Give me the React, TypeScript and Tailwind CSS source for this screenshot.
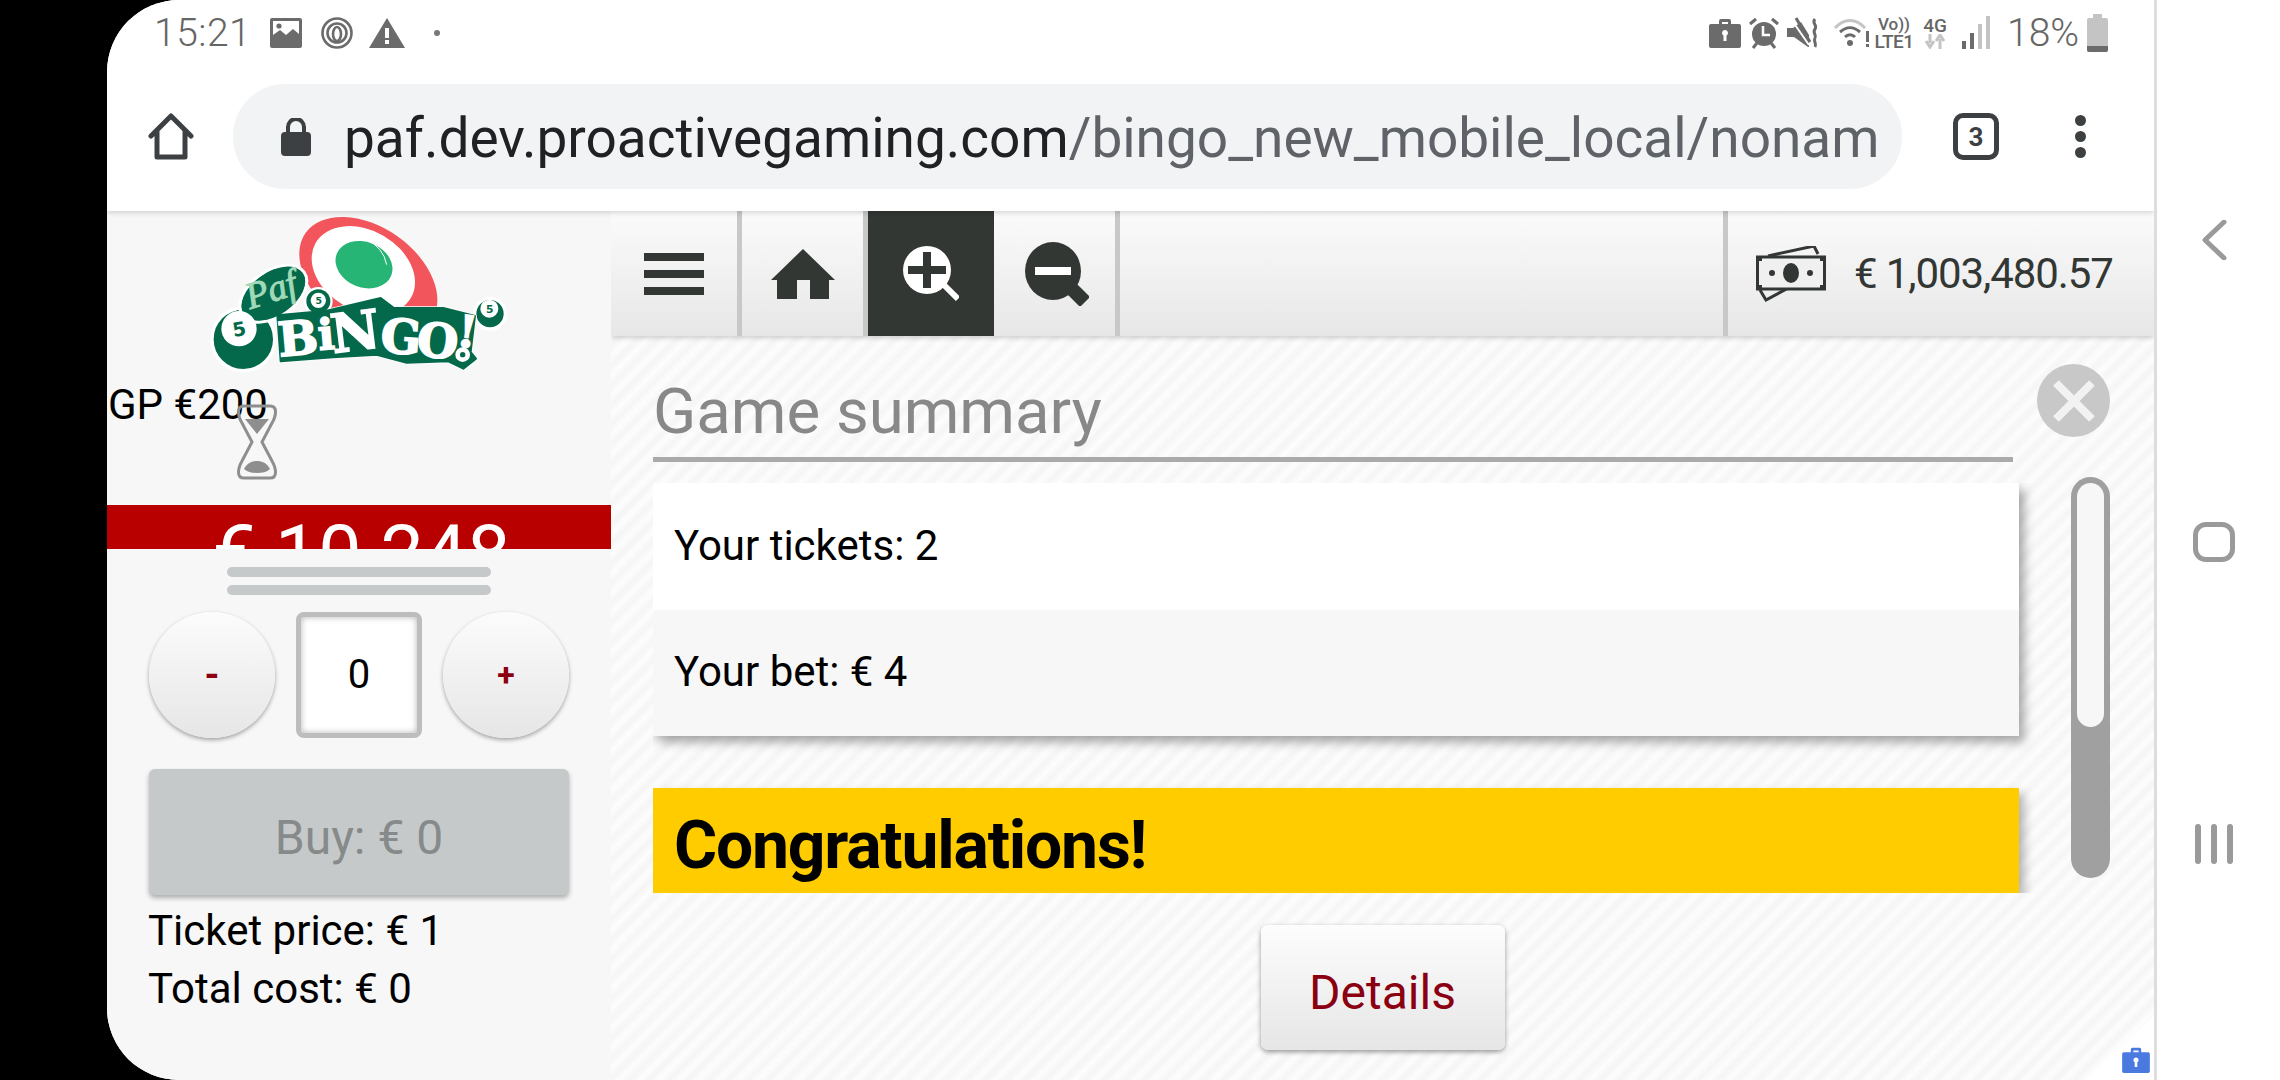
import React from "react";

const sans = "font-['Roboto','Liberation_Sans',sans-serif]";

function Logo() {
  const dark = "#04694a";
  const band = "M262 310 L410 296 L572 258 L612 288 L760 288 L855 312 L842 420 L858 440 L820 470 L775 448 L650 452 L560 428 L430 436 L272 448 Z";
  return (
    <svg width="340" height="180" viewBox="0 0 1020 540" className="block">
      <ellipse cx="535" cy="195" rx="230" ry="150" transform="rotate(35 535 195)" fill="#f2555c" />
      <ellipse cx="520" cy="175" rx="165" ry="120" transform="rotate(30 520 175)" fill="#ffffff" />
      <ellipse cx="522" cy="158" rx="88" ry="68" transform="rotate(22 522 158)" fill="#26b574" />
      <path d="M525 80 Q580 105 590 158" fill="none" stroke="#ffffff" strokeWidth="3" />
      <g stroke="#ffffff" strokeWidth="10">
        <circle cx="160" cy="382" r="94" fill={dark} />
        <ellipse cx="250" cy="245" rx="112" ry="68" transform="rotate(-35 250 245)" fill={dark} />
        <circle cx="385" cy="268" r="38" fill={dark} />
        <circle cx="900" cy="305" r="46" fill={dark} />
        <path d={band} fill={dark} strokeLinejoin="round" />
      </g>
      <ellipse cx="250" cy="245" rx="108" ry="64" transform="rotate(-35 250 245)" fill={dark} />
      <path d={band} fill={dark} stroke={dark} strokeWidth="6" strokeLinejoin="round" />
      <circle cx="147" cy="350" r="53" fill="#ffffff" />
      <circle cx="385" cy="268" r="36" fill={dark} />
      <circle cx="385" cy="265" r="23" fill="#ffffff" />
      <circle cx="898" cy="290" r="27" fill="#ffffff" />
      <circle cx="818" cy="428" r="22" fill="#ffffff" />
      <circle cx="818" cy="428" r="8" fill={dark} />
      <g fontFamily="'DejaVu Sans', sans-serif" fontWeight="700" fill={dark} textAnchor="middle">
        <text x="147" y="372" fontSize="58" transform="rotate(-10 147 350)">5</text>
        <text x="386" y="276" fontSize="28">5</text>
        <text x="899" y="302" fontSize="32">5</text>
      </g>
      <text x="180" y="292" fontSize="112" fontStyle="italic" fontFamily="'Liberation Serif', serif" fill="#9fd9b8" stroke="#9fd9b8" strokeWidth="3" transform="rotate(-18 180 292)">Paf</text>
      <g fontFamily="'DejaVu Serif', serif" fontWeight="700" fill="#ffffff" stroke="#ffffff" strokeWidth="5" textAnchor="middle">
        <text x="328" y="428" fontSize="142" transform="rotate(-5 328 428)">B</text>
        <text x="412" y="412" fontSize="128" transform="rotate(-5 412 412)">i</text>
        <text x="502" y="414" fontSize="160" transform="rotate(-7 502 414)">N</text>
        <text x="630" y="424" fontSize="142" transform="rotate(4 630 424)">G</text>
        <text x="738" y="436" fontSize="142" transform="rotate(6 738 436)">O</text>
        <text x="825" y="405" fontSize="132" transform="rotate(8 825 405)">!</text>
      </g>
    </svg>
  );
}

function StatusLeft() {
  const c = "#6b6b6b";
  return (
    <div className="flex items-center">
      <span className={`${sans} text-[39px] leading-none font-light text-[#666] tracking-[0.5px] w-[116px]`}>15:21</span>
      <svg width="32" height="30" viewBox="0 0 32 30" className="mr-[18px]">
        <path fillRule="evenodd" d="M2 0h28a2 2 0 0 1 2 2v26a2 2 0 0 1-2 2H2a2 2 0 0 1-2-2V2a2 2 0 0 1 2-2zM3 3v14l7 -5 6 5 7-6 6 5V3z" fill={c} />
        <circle cx="9" cy="8" r="2.6" fill={c} />
      </svg>
      <svg width="34" height="32" viewBox="0 0 34 32" className="mr-[15px]">
        <g fill="none" stroke={c} strokeWidth="2.6">
          <circle cx="17" cy="16" r="14.5" />
          <circle cx="17" cy="16" r="9.5" />
          <ellipse cx="17" cy="17" rx="4" ry="7" />
        </g>
      </svg>
      <svg width="36" height="30" viewBox="0 0 36 30" className="mr-[29px]">
        <path fillRule="evenodd" d="M18 0L36 30H0zM16 10v10h4V10zM16 22v4h4v-4z" fill={c} />
      </svg>
      <div className="w-[6px] h-[6px] rounded-full bg-[#777]" />
    </div>
  );
}

function StatusRight() {
  const c = "#6b6b6b";
  const l = "#c4c4c4";
  return (
    <div className="flex items-center">
      <svg width="32" height="30" viewBox="0 0 32 30" className="mr-[7px]">
        <path fillRule="evenodd" d="M10 6V3a2 2 0 0 1 2-2h8a2 2 0 0 1 2 2v3h8a2 2 0 0 1 2 2v20a2 2 0 0 1-2 2H2a2 2 0 0 1-2-2V8a2 2 0 0 1 2-2zM13 4v2h6V4zM16 12a3 3 0 0 0-1.500 5.600V23h3v-5.400A3 3 0 0 0 16 12z" fill={c} />
      </svg>
      <svg width="32" height="32" viewBox="0 0 32 32" className="mr-[7px]">
        <circle cx="16" cy="17" r="12" fill={c} />
        <path d="M15 9v9h7" fill="none" stroke="#fff" strokeWidth="2.500" />
        <path d="M2 7l6-5M30 7l-6-5M5 31l4-5M27 31l-4-5" stroke={c} strokeWidth="3" />
      </svg>
      <svg width="32" height="32" viewBox="0 0 32 32" className="mr-[15px]">
        <path d="M0 11h6L14 5l8 13v12h-1L7 20H0z" fill={c} />
        <path d="M4 2l18 26" stroke="#fff" strokeWidth="2" />
        <path d="M9 1l14 24" stroke={c} strokeWidth="3" />
        <path d="M28 2c-4 4 3 6 0 10s2 6 0 9 2 6 0 9" fill="none" stroke={c} strokeWidth="3" />
      </svg>
      <svg width="36" height="32" viewBox="0 0 36 32" className="mr-[5px]">
        <path d="M1 11C10 1 22 1 31 11" fill="none" stroke={l} strokeWidth="3" />
        <path d="M6 15C13 9 19 9 26 15M11 20C14 17 18 17 21 20" fill="none" stroke={c} strokeWidth="3" />
        <circle cx="16" cy="26" r="3" fill={c} />
        <rect x="32" y="14" width="3" height="11" fill={c} />
        <rect x="32" y="27" width="3" height="3" fill={c} />
      </svg>
      <div className={`${sans} flex flex-col items-center w-[38px] mr-[10px] text-[#666] font-medium leading-[17px]`}>
        <span className="text-[17px]">Vo))</span>
        <span className="text-[19px] tracking-[-0.5px]">LTE1</span>
      </div>
      <div className={`${sans} flex flex-col items-center w-[24px] mr-[15px] text-[#666] font-medium leading-[17px]`}>
        <span className="text-[19px]">4G</span>
        <svg width="24" height="15" viewBox="0 0 24 15">
          <path d="M7 0v9M3 7l4 6 4-6M17 15V5M13 7l4-6 4 6" fill="none" stroke={l} strokeWidth="3" />
        </svg>
      </div>
      <svg width="28" height="36" viewBox="0 0 28 36" className="mr-[17px]">
        <rect x="0" y="26" width="4" height="8" fill={c} />
        <rect x="8" y="18" width="4" height="16" fill={c} />
        <rect x="16" y="9" width="4" height="25" fill={l} />
        <rect x="24" y="1" width="4" height="33" fill={l} />
      </svg>
      <span className={`${sans} text-[39px] leading-none font-light text-[#666] w-[80px]`}>18%</span>
      <svg width="21" height="38" viewBox="0 0 21 38">
        <path d="M6 0h9v4h4a2 2 0 0 1 2 2v30a2 2 0 0 1-2 2H2a2 2 0 0 1-2-2V6a2 2 0 0 1 2-2h4z" fill={l} />
        <path d="M0 32h21v4a2 2 0 0 1-2 2H2a2 2 0 0 1-2-2z" fill={c} />
      </svg>
    </div>
  );
}

function AddressBar() {
  return (
    <div className="flex items-center h-[105px] mt-[22px]">
      <div className="w-[126px] flex justify-start pl-[41px]">
        <svg width="46" height="47" viewBox="0 0 46 47">
          <path d="M3 23L23 3l20 20M9 18v26h28V18" fill="none" stroke="#3c4043" strokeWidth="5" strokeLinejoin="round" strokeLinecap="round" />
        </svg>
      </div>
      <div className="w-[1669px] h-[105px] rounded-[52px] bg-[#f1f3f4] flex items-center pl-[48px] overflow-hidden">
        <svg width="30" height="38" viewBox="0 0 30 38" className="shrink-0 mr-[33px]">
          <path d="M7 15V9a8 8 0 0 1 16 0v6" fill="none" stroke="#3c4043" strokeWidth="4" />
          <rect x="0" y="14" width="30" height="24" rx="4" fill="#3c4043" />
        </svg>
        <span className={`${sans} text-[55px] leading-none pt-[3px] whitespace-nowrap text-[#5f6368] tracking-[-0.01px]`}>
          <span className="text-[#202124]">paf.dev.proactivegaming.com</span>/bingo_new_mobile_local/nonam
        </span>
      </div>
      <div className="w-[51px]" />
      <div className={`${sans} w-[46px] h-[47px] rounded-[10px] border-[5px] border-[#3c4043] flex items-center justify-center text-[26px] font-bold text-[#3c4043] leading-none`}>3</div>
      <div className="ml-[76px] flex flex-col gap-[5px]">
        <div className="w-[11px] h-[11px] rounded-full bg-[#3c4043]" />
        <div className="w-[11px] h-[11px] rounded-full bg-[#3c4043]" />
        <div className="w-[11px] h-[11px] rounded-full bg-[#3c4043]" />
      </div>
    </div>
  );
}

function Hourglass() {
  return (
    <svg width="40" height="76" viewBox="0 0 40 76" className="absolute left-[130px] top-[193px]">
      <path d="M7 2h26c8 0 6 10 2 17L25 38l10 19c4 7 6 17-2 17H7c-8 0-6-10-2-17l10-19L5 19C1 12-1 2 7 2z" fill="none" stroke="#8e8e8e" strokeWidth="3" />
      <path d="M8 15h24L20 30z" fill="#8e8e8e" />
      <path d="M7 65c3-6 8-8 13-8s10 2 13 8c-3 3-8 4-13 4s-10-1-13-4z" fill="#8e8e8e" />
    </svg>
  );
}

function LeftPanel() {
  return (
    <div className={`${sans} relative w-[504px] h-full bg-[#f7f7f7] flex flex-col shrink-0`}>
      <div className="h-[171px] pl-[83px] pt-[1px]">
        <Logo />
      </div>
      <div className="h-[123px] pl-[1px] text-[42px] leading-[46px] text-black">GP €200</div>
      <Hourglass />
      <div className="h-[44px] bg-[#b90000] overflow-hidden text-center text-white text-[77px] leading-[76px] pt-[11px] pl-[5px] shrink-0">€ 10 248</div>
      <div className="flex flex-col items-center gap-[8px] mt-[18px]">
        <div className="w-[264px] h-[10px] rounded-[5px] bg-[#c6c9c9]" />
        <div className="w-[264px] h-[10px] rounded-[5px] bg-[#c6c9c9]" />
      </div>
      <div className="flex justify-between mx-[42px] mt-[17px]">
        <div className="w-[126px] h-[126px] rounded-full bg-gradient-to-b from-[#fcfcfc] to-[#e6e6e6] shadow-[0_2px_4px_rgba(0,0,0,0.35)] flex items-center justify-center text-[38px] font-bold text-[#8b0011]">-</div>
        <div className="w-[126px] h-[126px] rounded-[8px] border-[5px] border-[#bdbdbd] bg-white shadow-[inset_0_0_6px_rgba(0,0,0,0.3)] flex items-center justify-center text-[40px] text-black">0</div>
        <div className="w-[126px] h-[126px] rounded-full bg-gradient-to-b from-[#fcfcfc] to-[#e6e6e6] shadow-[0_2px_4px_rgba(0,0,0,0.35)] flex items-center justify-center text-[32px] font-bold text-[#8b0011]">+</div>
      </div>
      <div className="mx-[42px] mt-[31px] h-[126px] rounded-[6px] bg-[#c6c9c9] shadow-[0_3px_5px_rgba(0,0,0,0.3)] flex items-center justify-center pt-[11px] text-[48px] text-[#868a8a]">Buy: € 0</div>
      <div className="mx-[41px] mt-[7px] text-[42px] leading-[58px] text-black">
        <div>Ticket price: € 1</div>
        <div>Total cost: € 0</div>
      </div>
    </div>
  );
}

function TopBar() {
  const sep = <div className="w-[5px] h-full bg-[#c8c8c8] shrink-0" />;
  const dark = "#333734";
  return (
    <div className="relative z-[5] flex items-stretch h-[125px] bg-gradient-to-b from-[#fbfbfb] to-[#e7e7e7] shadow-[0_2px_5px_rgba(0,0,0,0.18)] shrink-0">
      <div className="w-[126px] flex items-center justify-center">
        <div className="flex flex-col gap-[9px]">
          <div className="w-[60px] h-[8px]" style={{ backgroundColor: dark }} />
          <div className="w-[60px] h-[8px]" style={{ backgroundColor: dark }} />
          <div className="w-[60px] h-[8px]" style={{ backgroundColor: dark }} />
        </div>
      </div>
      {sep}
      <div className="w-[121px] flex items-center justify-center">
        <svg width="64" height="50" viewBox="0 0 64 50">
          <path d="M32 0L64 31h-6v19H39V31H26v19H6V31H0z" fill={dark} />
        </svg>
      </div>
      {sep}
      <div className="w-[126px] flex items-center justify-center bg-[#333734]">
        <svg width="56" height="56" viewBox="0 0 56 56">
          <circle cx="24" cy="24" r="24" fill="#fff" />
          <path d="M41 39l14 14" stroke="#fff" strokeWidth="6" />
          <path d="M5 24h38M24 6v36" stroke={dark} strokeWidth="8" />
        </svg>
      </div>
      <div className="w-[121px] flex items-center justify-center pl-[5px]">
        <svg width="64" height="64" viewBox="0 0 64 64">
          <ellipse cx="28" cy="29" rx="28" ry="29" fill={dark} />
          <path d="M44 44l16 16" stroke={dark} strokeWidth="14" />
          <rect x="10" y="25" width="36" height="8" fill="#fff" />
        </svg>
      </div>
      {sep}
      <div className="flex-1" />
      {sep}
      <div className={`${sans} w-[426px] flex items-center pl-[28px] text-[#333734]`}>
        <svg width="70" height="56" viewBox="0 0 70 56" className="mr-[28px]">
          <path d="M4 44l6 10 52-28M12 10L58 0l4 8" fill="none" stroke={dark} strokeWidth="3" />
          <rect x="1.500" y="11" width="67" height="32" fill="#f0f0f0" stroke={dark} strokeWidth="3" />
          <ellipse cx="35" cy="27" rx="8" ry="10" fill={dark} />
          <circle cx="16" cy="27" r="3" fill={dark} />
          <circle cx="54" cy="27" r="3" fill={dark} />
          <path d="M0 10h6v5H0zM64 10h6v5h-6zM0 39h6v5H0zM64 39h6v5h-6z" fill={dark} />
        </svg>
        <span className="text-[42px] leading-none tracking-[-1.1px] whitespace-nowrap">€ 1,003,480.57</span>
      </div>
    </div>
  );
}

function Main() {
  return (
    <div className="relative flex-1 h-full flex flex-col overflow-hidden">
      <TopBar />
      <div className={`${sans} relative flex-1 flex flex-col bg-[repeating-linear-gradient(135deg,#fdfdfd_0px,#f5f5f5_7px,#fdfdfd_14px)]`}>
        <div className="flex pl-[42px]">
          <div className="w-[1384px] flex flex-col">
            <div className="w-[1360px] h-[126px] border-b-[5px] border-[#aaaaaa] pt-[41px] text-[63.5px] leading-[70px] text-[#888888]">Game summary</div>
            <div className="mt-[21px] h-[410px] w-[1384px] overflow-hidden">
              <div className="w-[1366px] shadow-[5px_6px_10px_rgba(0,0,0,0.35)]">
                <div className="h-[127px] bg-white flex items-center pl-[21px] pb-[3px] text-[42px] text-black">Your tickets: 2</div>
                <div className="h-[126px] bg-[#f7f7f7] flex items-center pl-[21px] pb-[3px] text-[42px] text-black">Your bet: € 4</div>
              </div>
              <div className="mt-[52px] w-[1366px] h-[105px] bg-[#ffcc00] shadow-[5px_6px_10px_rgba(0,0,0,0.3)] flex items-center pl-[21px] pt-[9px] text-[66px] font-bold tracking-[-1.2px] text-black">Congratulations!</div>
            </div>
          </div>
          <div className="w-[73px] flex flex-col items-end">
            <div className="mt-[28px] w-[73px] h-[73px] rounded-full bg-[#c8c8c8] flex items-center justify-center">
              <svg width="48" height="48" viewBox="0 0 48 48">
                <path d="M6 6l36 36M42 6L6 42" stroke="#f2f2f2" strokeWidth="8" />
              </svg>
            </div>
            <div className="relative mt-[40px] w-[39px] h-[401px] rounded-[20px] bg-[#a0a0a0] overflow-hidden">
              <div className="absolute left-[6px] top-[6px] w-[27px] h-[244px] rounded-[14px] bg-[#f7f7f7]" />
            </div>
          </div>
        </div>
        <div className="flex justify-center mt-[32px]">
          <div className="w-[244px] h-[125px] rounded-[7px] bg-gradient-to-b from-[#fdfdfd] to-[#e6e6e6] shadow-[0_2px_5px_rgba(0,0,0,0.4)] flex items-center justify-center pt-[10px] text-[48px] text-[#8b0011]">Details</div>
        </div>
      </div>
      <div className="absolute right-0 bottom-0 w-[68px] h-[65px] bg-white [clip-path:polygon(100%_0,100%_100%,0_100%)]" />
      <svg width="28" height="26" viewBox="0 0 32 30" className="absolute right-[4px] bottom-[7px]">
        <path fillRule="evenodd" d="M10 6V3a2 2 0 0 1 2-2h8a2 2 0 0 1 2 2v3h8a2 2 0 0 1 2 2v20a2 2 0 0 1-2 2H2a2 2 0 0 1-2-2V8a2 2 0 0 1 2-2zM13 4v2h6V4zM16 12a3 3 0 0 0-1.500 5.600V23h3v-5.400A3 3 0 0 0 16 12z" fill="#4a7ae0" />
      </svg>
    </div>
  );
}

function NavBar() {
  const c = "#9a9a9a";
  return (
    <div className="flex-1 h-full bg-white flex flex-col items-center pr-[9px]">
      <svg width="26" height="40" viewBox="0 0 26 40" className="mt-[220px]">
        <path d="M23 2L4 20l19 18" fill="none" stroke={c} strokeWidth="5" strokeLinecap="round" strokeLinejoin="round" />
      </svg>
      <div className="mt-[262px] w-[42px] h-[40px] rounded-[13px] border-[5px] border-[#9a9a9a]" />
      <div className="mt-[262px] flex gap-[10px]">
        <div className="w-[6px] h-[40px] rounded-[3px] bg-[#9a9a9a]" />
        <div className="w-[6px] h-[40px] rounded-[3px] bg-[#9a9a9a]" />
        <div className="w-[6px] h-[40px] rounded-[3px] bg-[#9a9a9a]" />
      </div>
    </div>
  );
}

export default function App() {
  return (
    <div className="w-[2280px] h-[1080px] flex bg-black overflow-hidden">
      <div className="w-[107px] h-full shrink-0" />
      <div className="w-[2047px] h-full shrink-0 rounded-l-[72px] overflow-hidden bg-white flex flex-col">
        <div className="relative z-10 h-[211px] shrink-0 bg-white shadow-[0_2px_5px_rgba(0,0,0,0.15)]">
          <div className="flex justify-between items-center pl-[47px] pr-[46px] pt-[4px] h-[62px]">
            <StatusLeft />
            <StatusRight />
          </div>
          <AddressBar />
        </div>
        <div className="flex flex-1 min-h-0">
          <LeftPanel />
          <Main />
        </div>
      </div>
      <div className="w-[3px] h-full shrink-0 bg-[#dddddd]" />
      <NavBar />
    </div>
  );
}
